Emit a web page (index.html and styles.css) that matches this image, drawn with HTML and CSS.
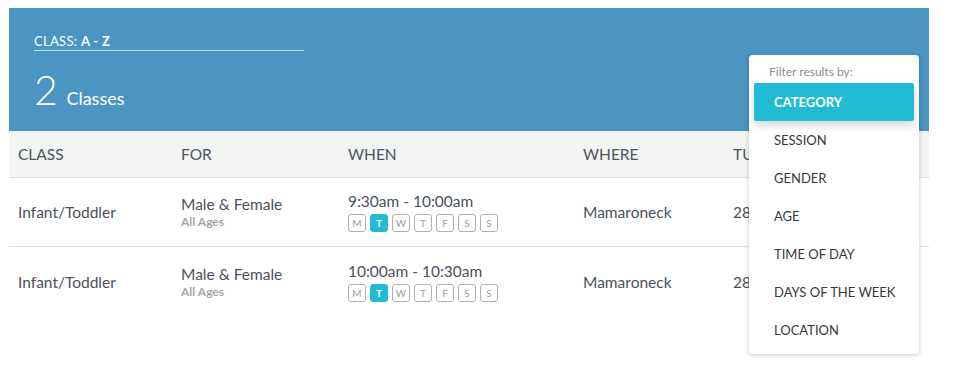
FILE: index.html
```html
<!DOCTYPE html>
<html lang="en">
<head>
    <meta charset="UTF-8">
    <title>Classes</title>
    <link rel="stylesheet" href="styles.css">
</head>
<body>

    <div class="container">
        <div class="banner">
            <div class="sort">CLASS: <b>A - Z</b></div>
            <div class="count"><span class="num">2</span> Classes</div>
        </div>

        <div class="row head">
            <div>CLASS</div>
            <div>FOR</div>
            <div>WHEN</div>
            <div>WHERE</div>
            <div>TUITION</div>
        </div>

        <div class="row">
            <div>Infant/Toddler</div>
            <div>Male &amp; Female<span class="sub">All Ages</span></div>
            <div>
                9:30am - 10:00am
                <div class="days">
                    <span>M</span><span class="on">T</span><span>W</span><span>T</span><span>F</span><span>S</span><span>S</span>
                </div>
            </div>
            <div>Mamaroneck</div>
            <div>285</div>
        </div>

        <div class="row last">
            <div>Infant/Toddler</div>
            <div>Male &amp; Female<span class="sub">All Ages</span></div>
            <div>
                10:00am - 10:30am
                <div class="days">
                    <span>M</span><span class="on">T</span><span>W</span><span>T</span><span>F</span><span>S</span><span>S</span>
                </div>
            </div>
            <div>Mamaroneck</div>
            <div>285</div>
        </div>

        <div class="filter">
            <p class="filter-title">Filter results by:</p>
            <ul>
                <li class="active">CATEGORY</li>
                <li>SESSION</li>
                <li>GENDER</li>
                <li>AGE</li>
                <li>TIME OF DAY</li>
                <li>DAYS OF THE WEEK</li>
                <li>LOCATION</li>
            </ul>
        </div>
    </div>

</body>
</html>
```

FILE: styles.css
```css
body {
    margin: 8px 0 0 9px;
    font-family: Lato, "Open Sans", sans-serif;
    background: white;
    color: #4a515c;
}
.container {
    position: relative;
    width: 920px;
    min-height: 361px;
}
.banner {
    background-color: #4a95c1;
    color: white;
    height: 123px;
    padding: 25px 0 0 25px;
    box-sizing: border-box;
}
.sort {
    width: 270px;
    font-size: 13px;
    line-height: 16px;
    letter-spacing: 0.3px;
    padding-bottom: 1px;
    border-bottom: 1px solid #c9dcea;
}
.sort b {
    font-size: 13px;
}
.count {
    margin-top: 17px;
    font-size: 18px;
    line-height: 44px;
}
.count .num {
    font-size: 41px;
    font-weight: 300;
    margin-right: 4px;
}
.row {
    display: grid;
    grid-template-columns: 163px 167px 235px 150px 1fr;
    align-items: center;
    height: 69px;
    box-sizing: border-box;
    padding-left: 9px;
    border-bottom: 1px solid #dfe1e2;
    font-size: 15.5px;
}
.row.head {
    height: 47px;
    background-color: #f3f4f4;
    color: #50555d;
}
.row.last {
    border-bottom: none;
}
.sub {
    display: block;
    font-size: 12px;
    font-weight: bold;
    color: #a3a6a9;
    margin-top: 1px;
}
.days {
    display: flex;
    gap: 4px;
    margin-top: 4px;
}
.days span {
    min-width: 12px;
    height: 16px;
    padding: 0 2px;
    border: 1px solid #aeb1b4;
    border-radius: 3px;
    font-size: 10px;
    line-height: 16px;
    text-align: center;
    color: #9b9ea2;
}
.days span.on {
    background-color: #21bcd4;
    border-color: #21bcd4;
    color: white;
    font-weight: bold;
}
.filter {
    position: absolute;
    left: 740px;
    top: 47px;
    width: 170px;
    height: 299px;
    background: white;
    border-radius: 4px;
    box-shadow: 0 1px 5px rgba(0, 0, 0, 0.22);
}
.filter-title {
    margin: 9px 0 0 20px;
    font-size: 12px;
    color: #8a8d90;
}
.filter ul {
    list-style: none;
    margin: 4px 5px 0;
    padding: 0;
}
.filter li {
    height: 38px;
    line-height: 38px;
    padding-left: 20px;
    font-size: 13px;
    color: #36393d;
}
.filter li.active {
    background-color: #21bcd4;
    color: white;
    font-weight: bold;
    border-radius: 2px;
    box-shadow: 0 4px 8px rgba(0, 0, 0, 0.18);
}
```
